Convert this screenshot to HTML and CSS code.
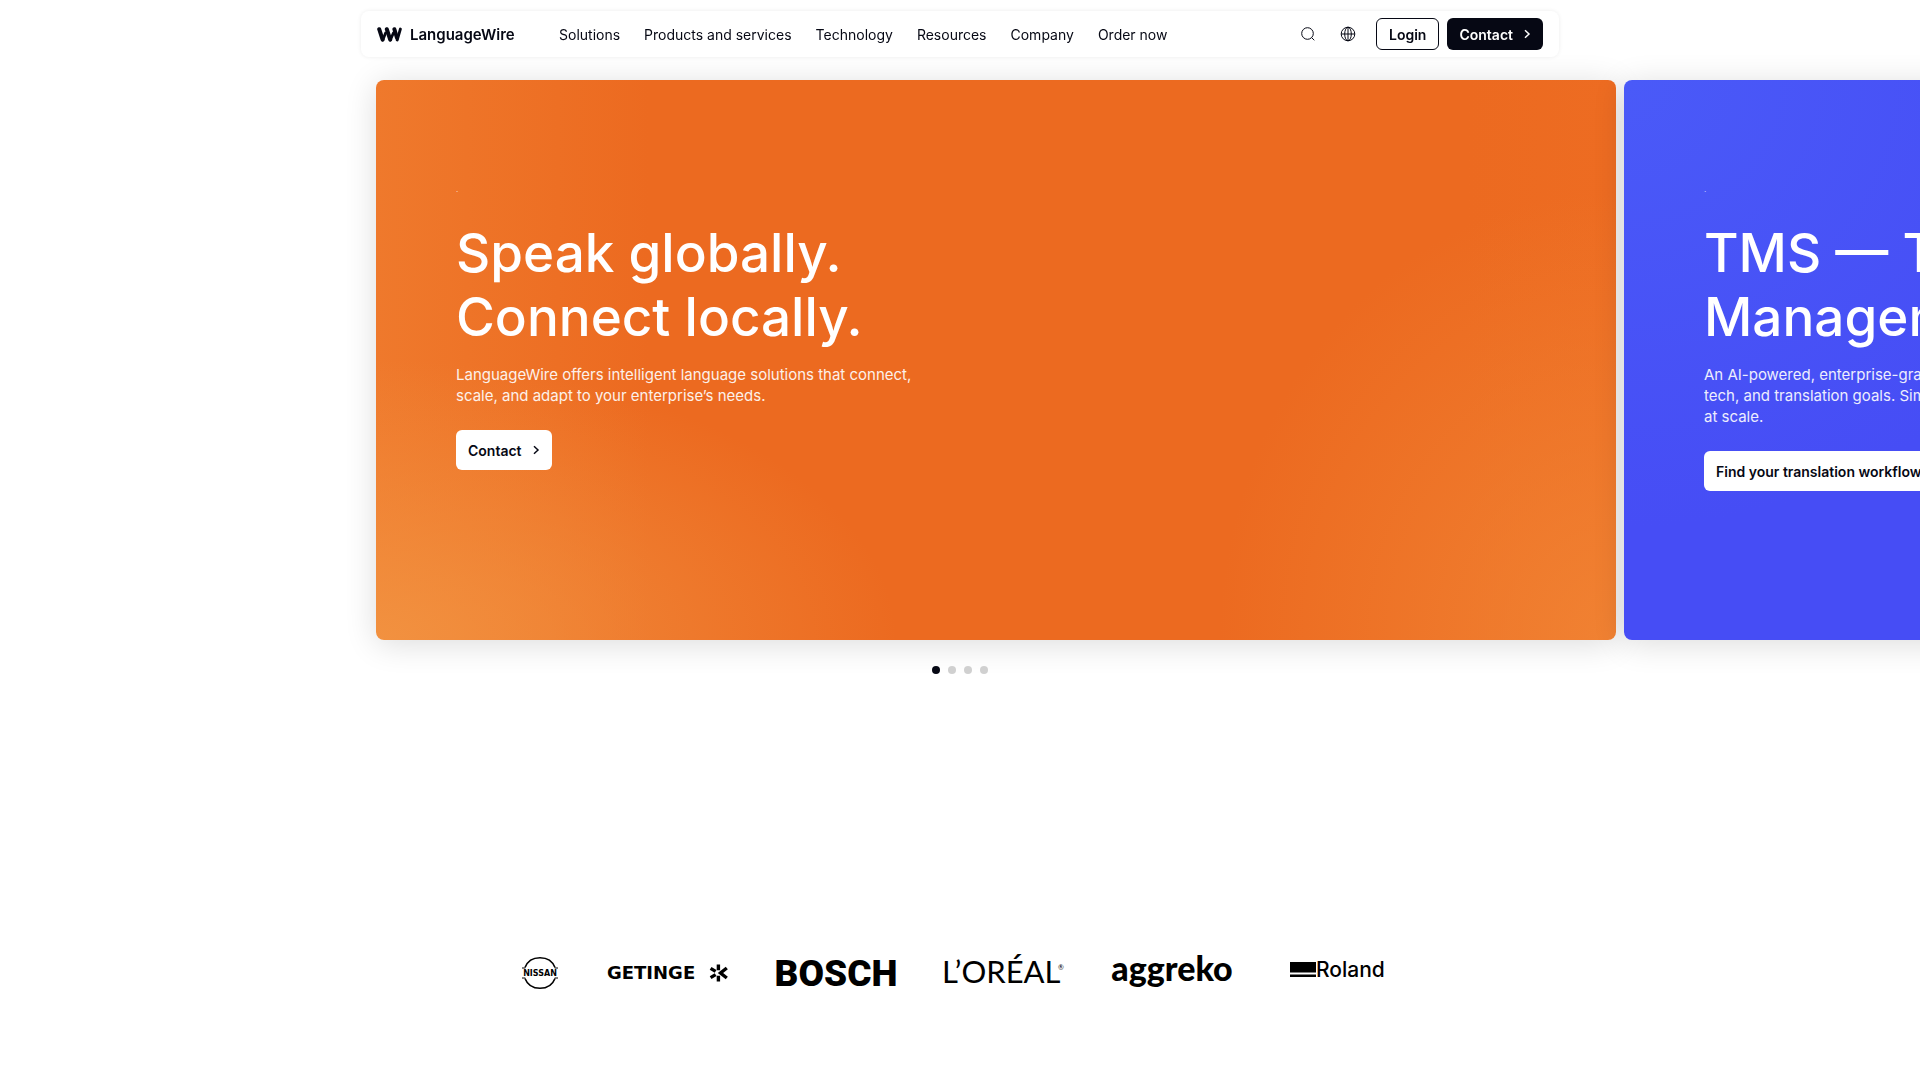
FILE: index.html
```html
<!DOCTYPE html>
<html lang="en">
<head>
    <meta charset="UTF-8">
    <meta name="viewport" content="width=device-width, initial-scale=1.0">
    <title>LanguageWire</title>
    <link rel="stylesheet" href="styles.css">
</head>
<body>
    <header class="header">
        <a class="brand" href="#">
            <svg class="brand-mark" viewBox="0 0 25 15" aria-hidden="true">
                <path d="M2.2 2.2 L5.6 12.6 M9.8 2.2 L13.2 12.6 M17.4 2.2 L20 11" fill="none" stroke="#060814" stroke-width="4" stroke-linecap="round"/>
                <path d="M5.8 13 L8.6 6 M13.4 13 L16.4 6 M20.2 13 L23.4 2" fill="none" stroke="#060814" stroke-width="2.8" stroke-linecap="round"/>
            </svg>
            <span>LanguageWire</span>
        </a>
        <nav class="nav">
            <a href="#">Solutions</a>
            <a href="#">Products and services</a>
            <a href="#">Technology</a>
            <a href="#">Resources</a>
            <a href="#">Company</a>
            <a href="#">Order now</a>
        </nav>
        <div class="actions">
            <button class="icon-btn" aria-label="Search">
                <svg width="16" height="16" viewBox="0 0 16 16" fill="none" stroke="#060814">
                    <circle cx="7.5" cy="7.5" r="5.8"/>
                    <path d="M11.7 11.7 L14.3 14.3"/>
                </svg>
            </button>
            <button class="icon-btn" aria-label="Language">
                <svg width="16" height="16" viewBox="0 0 16 16" fill="none" stroke="#060814">
                    <circle cx="8" cy="8" r="6.8"/>
                    <ellipse cx="8" cy="8" rx="3.3" ry="6.8"/>
                    <path d="M8 1.2V14.8M1.2 8H14.8"/>
                </svg>
            </button>
            <a class="btn btn-outline" href="#">Login</a>
            <a class="btn btn-dark" href="#">Contact
                <svg width="8" height="10" viewBox="0 0 8 10" fill="none" stroke="currentColor" stroke-width="1.5"><path d="M2 1.2 L6 5 L2 8.8"/></svg>
            </a>
        </div>
    </header>

    <main>
        <!-- Carousel -->
        <section class="carousel">
            <article class="slide slide-orange">
                <p class="eyebrow">.</p>
                <h1>Speak globally.<br>Connect locally.</h1>
                <p class="lead">LanguageWire offers intelligent language solutions that connect,<br>scale, and adapt to your enterprise’s needs.</p>
                <a class="btn btn-white" href="#">Contact
                    <svg width="8" height="10" viewBox="0 0 8 10" fill="none" stroke="currentColor" stroke-width="1.5"><path d="M2 1.2 L6 5 L2 8.8"/></svg>
                </a>
            </article>
            <article class="slide slide-blue">
                <p class="eyebrow">.</p>
                <h2>TMS — Translation<br>Management System</h2>
                <p class="lead">An AI-powered, enterprise-grade TMS that fits your content,<br>tech, and translation goals. Simplify your workflows<br>at scale.</p>
                <a class="btn btn-white" href="#">Find your translation workflow
                    <svg width="8" height="10" viewBox="0 0 8 10" fill="none" stroke="currentColor" stroke-width="1.5"><path d="M2 1.2 L6 5 L2 8.8"/></svg>
                </a>
            </article>
        </section>
        <div class="dots">
            <button class="dot active" aria-label="Slide 1"></button>
            <button class="dot" aria-label="Slide 2"></button>
            <button class="dot" aria-label="Slide 3"></button>
            <button class="dot" aria-label="Slide 4"></button>
        </div>

        <!-- Customer logos -->
        <section class="logos">
            <svg class="logo-small" viewBox="0 0 40 40">
                <path d="M5 14.5 C7.500 8 13 4.700 20 4.700 S32.500 8 35 14.500 M5 25.500 C7.500 32 13 35.300 20 35.300 S32.500 32 35 25.500" fill="none" stroke="#000" stroke-width="1.6"/>
                <path d="M2 15H5.3M34.7 15H38M2 25H5.3M34.7 25H38" stroke="#000"/>
                <text class="t-nissan" x="20" y="23" text-anchor="middle">NISSAN</text>
            </svg>
            <svg class="logo" viewBox="0 0 120 40">
                <text class="t-getinge" x="-1" y="26">GETINGE</text>
                <path d="M110.4 11.5V17.3M110.4 22.7V28.5M102.6 15.4L107.6 18.4M102.6 24.6L107.6 21.6M118.8 15L112.5 20L118.8 25" fill="none" stroke="#000" stroke-width="3.4"/>
            </svg>
            <svg class="logo" viewBox="0 0 120 40">
                <text class="t-bosch" x="60" y="33" text-anchor="middle">BOSCH</text>
            </svg>
            <svg class="logo" viewBox="0 0 120 40">
                <text class="t-loreal" x="-2" y="30">L’ORÉAL</text>
                <text class="t-reg" x="114" y="17">®</text>
            </svg>
            <svg class="logo" viewBox="0 0 120 40">
                <text class="t-aggreko" x="60" y="28" text-anchor="middle">aggreko</text>
            </svg>
            <svg class="logo" viewBox="0 0 120 40">
                <path d="M10 9H36V19.5H10ZM10 21.5H36V24H10Z"/>
                <text class="t-roland" x="36" y="24">Roland</text>
            </svg>
        </section>
    </main>
</body>
</html>
```
FILE: styles.css
```css
* {
    box-sizing: border-box;
}

body {
    margin: 0;
    font-family: Inter, "Liberation Sans", sans-serif;
    font-size: 14px;
    color: #060814;
    background-color: #fff;
    overflow-x: hidden;
}

a {
    color: inherit;
    text-decoration: none;
}

.header {
    position: sticky;
    top: 11px;
    z-index: 10;
    display: flex;
    align-items: center;
    max-width: 1198px;
    height: 46px;
    margin: 11px auto 0;
    padding: 0 16px;
    background-color: #fff;
    border-radius: 8px;
    box-shadow: 0 0 4px rgba(0, 0, 0, 0.08);
}

.brand {
    display: flex;
    align-items: center;
    gap: 8px;
    width: 182px;
    font-size: 15px;
    font-weight: 600;
}

.brand-mark {
    width: 25px;
    height: 15px;
}

.nav {
    display: flex;
    gap: 24px;
}

.actions {
    display: flex;
    align-items: center;
    gap: 8px;
    margin-left: auto;
}

.icon-btn {
    display: flex;
    align-items: center;
    justify-content: center;
    width: 32px;
    height: 32px;
    padding: 0;
    border: none;
    background: none;
    cursor: pointer;
}

.btn {
    display: inline-flex;
    align-items: center;
    gap: 10px;
    height: 32px;
    padding: 0 12px;
    border-radius: 6px;
    font-weight: 600;
}

.btn-outline {
    border: 1px solid #060814;
    margin-left: 4px;
}

.btn-dark {
    background-color: #060814;
    color: #fff;
}

.btn-white {
    height: 40px;
    background-color: #fff;
    color: #060814;
}

.carousel {
    display: flex;
    gap: 8px;
    padding: 23px 0 0 calc((100% - 1168px) / 2);
}

.slide {
    flex: 0 0 1240px;
    min-height: 560px;
    padding: 103px 80px 0;
    border-radius: 8px;
    color: #fff;
    box-shadow: 0 4px 32px rgba(0, 0, 0, 0.14);
}

.slide-orange {
    background:
        radial-gradient(ellipse 42% 50% at 0% 100%, rgba(242, 148, 66, 0.9), rgba(236, 106, 32, 0) 100%),
        radial-gradient(ellipse 32% 80% at 100% 100%, rgba(241, 132, 52, 0.9), rgba(236, 106, 32, 0) 100%),
        linear-gradient(90deg, #ef792c 0%, #ec6a20 22%, #ec6a20 88%, #ed6c22 100%);
}

.slide-blue {
    background: radial-gradient(ellipse 40% 80% at 0% 0%, #4a5af8, #464df5);
}

.eyebrow {
    margin: 0;
    font-size: 8px;
    line-height: 12px;
    opacity: 0.7;
}

h1,
h2 {
    margin: 26px 0 15px;
    font-size: 53px;
    font-weight: 500;
    line-height: 64px;
}

.lead {
    margin: 0 0 24px;
    font-size: 15px;
    line-height: 21px;
    opacity: 0.9;
}

.dots {
    display: flex;
    justify-content: center;
    gap: 8px;
    padding-top: 26px;
}

.dot {
    width: 8px;
    height: 8px;
    padding: 0;
    border: none;
    border-radius: 50%;
    background-color: #d0d0d0;
    cursor: pointer;
}

.dot.active {
    background-color: #060814;
}

.logos {
    display: flex;
    justify-content: center;
    gap: 48px;
    margin: 279px 0 87px;
}

.logo {
    width: 120px;
    height: 40px;
    overflow: visible;
}

.logo-small {
    width: 40px;
    height: 40px;
}

.t-nissan {
    font: bold 8px "DejaVu Sans", sans-serif;
}

.t-getinge {
    font: bold 18px "DejaVu Sans", sans-serif;
}

.t-bosch {
    font: 900 37px Roboto, sans-serif;
}

.t-loreal {
    font: 31px Lato, sans-serif;
}

.t-reg {
    font: 7px Lato, sans-serif;
}

.t-aggreko {
    font: 900 34px Lato, sans-serif;
}

.t-roland {
    font: 500 21px Inter, sans-serif;
}
```
